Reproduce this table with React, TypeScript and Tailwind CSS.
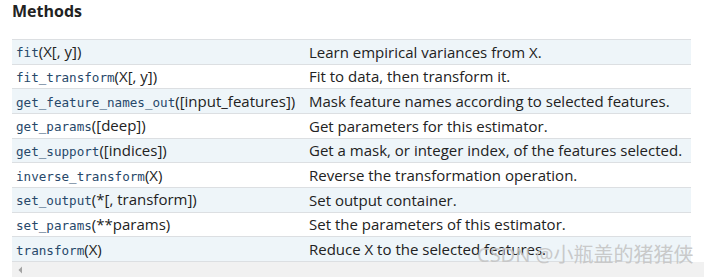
import React from "react";

const rows: { name: string; args: string; desc: string }[] = [
  { name: "fit", args: "(X[, y])", desc: "Learn empirical variances from X." },
  { name: "fit_transform", args: "(X[, y])", desc: "Fit to data, then transform it." },
  { name: "get_feature_names_out", args: "([input_features])", desc: "Mask feature names according to selected features." },
  { name: "get_params", args: "([deep])", desc: "Get parameters for this estimator." },
  { name: "get_support", args: "([indices])", desc: "Get a mask, or integer index, of the features selected." },
  { name: "inverse_transform", args: "(X)", desc: "Reverse the transformation operation." },
  { name: "set_output", args: "(*[, transform])", desc: "Set output container." },
  { name: "set_params", args: "(**params)", desc: "Set the parameters of this estimator." },
  { name: "transform", args: "(X)", desc: "Reduce X to the selected features." },
];

export default function App() {
  return (
    <div className="w-[704px] h-[277px] overflow-hidden bg-white relative" style={{ fontFamily: '"Open Sans", "Noto Sans", sans-serif' }}>
      <div className="pl-[12px] h-[39px]">
        <h3 className="text-[16px] font-bold text-[#222] leading-[22px]">Methods</h3>
      </div>
      <div className="ml-[12px]">
        <div className="w-[679px] border-b border-[#dcdfe2]">
          {rows.map((r, i) => (
            <div
              key={r.name}
              className={`flex items-center h-[24.67px] border-t border-[#dcdfe2] text-[15px] text-[#222] ${i % 2 === 0 ? "bg-[#eef5f9]" : "bg-white"}`}
            >
              <div className="w-[297px] pl-[4px] whitespace-nowrap">
                <span className="text-[12.6px] text-[#27486a]" style={{ fontFamily: '"DejaVu Sans Mono", monospace' }}>{r.name}</span>
                <span>{r.args}</span>
              </div>
              <div className="whitespace-nowrap">{r.desc}</div>
            </div>
          ))}
        </div>
        <div className="h-[16px] bg-[#f1f1f1] flex items-center pl-[6px]">
          <svg width="5" height="8" viewBox="0 0 5 8">
            <path d="M4 0.5 L0.5 4 L4 7.5 Z" fill="#a3a3a3" />
          </svg>
        </div>
      </div>
      <div
        className="absolute left-[477px] top-[240px] text-[20px] text-[#c4c4c4]/90 whitespace-nowrap"
        style={{ fontFamily: '"Noto Sans", "Noto Sans CJK SC", sans-serif' }}
      >
        CSDN @小瓶盖的猪猪侠
      </div>
    </div>
  );
}
